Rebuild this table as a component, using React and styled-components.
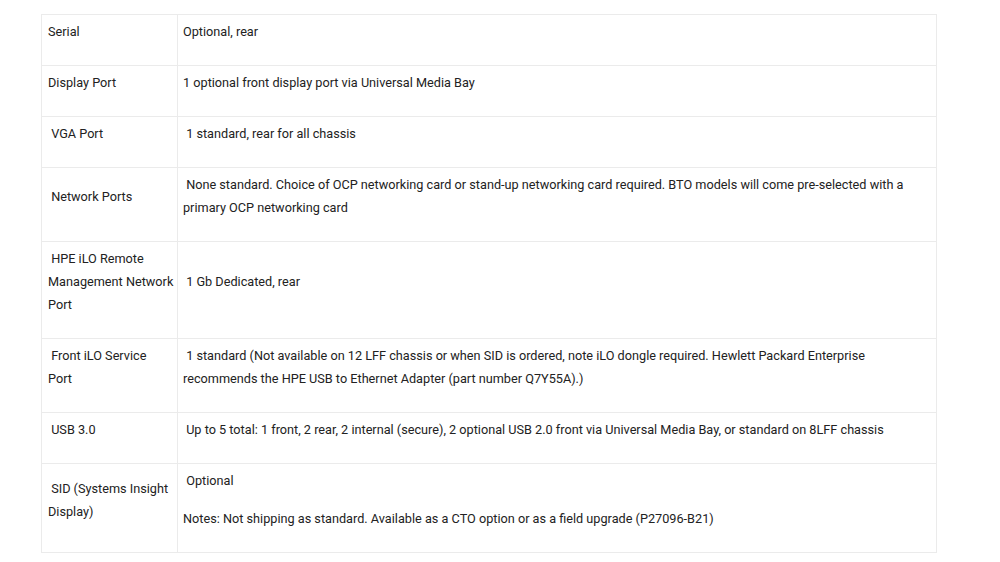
import React from "react";
import styled, { createGlobalStyle } from "styled-components";

const Global = createGlobalStyle`
  body {
    margin: 0;
    background: #ffffff;
    font-family: Roboto, "Liberation Sans", Arial, sans-serif;
  }
`;

const Page = styled.div`
  padding: 14px 0 0 41px;
`;

const Table = styled.table`
  width: 896px;
  border-collapse: collapse;
  border: 1px solid #ebebeb;
  font-size: 12.7px;
  line-height: 23px;
  color: #222222;
`;

const Row = styled.tr`
  border-bottom: 1px solid #ebebeb;
`;

const Cell = styled.td`
  vertical-align: middle;
  padding: ${(p) => (p.$label ? "5px 1px 7px 6px" : "5px 5px 7px 5px")};
  border-right: 1px solid #ebebeb;
  width: ${(p) => (p.$label ? "128px" : "auto")};

  & > p {
    margin: 0 0 15px;
  }
`;

const sp = "\u00a0";

// label lines are kept as the page breaks them
const rows = [
  { label: ["Serial"], value: ["Optional, rear"] },
  { label: ["Display Port"], value: ["1 optional front display port via Universal Media Bay"] },
  { label: [sp + "VGA Port"], value: [sp + "1 standard, rear for all chassis"] },
  {
    label: [sp + "Network Ports"],
    value: [
      sp +
        "None standard. Choice of OCP networking card or stand-up networking card required. BTO models will come pre-selected with a primary OCP networking card",
    ],
  },
  {
    label: [sp + "HPE iLO Remote", "Management Network", "Port"],
    value: [sp + "1 Gb Dedicated, rear"],
  },
  {
    label: [sp + "Front iLO Service", "Port"],
    value: [
      sp +
        "1 standard (Not available on 12 LFF chassis or when SID is ordered, note iLO dongle required. Hewlett Packard Enterprise recommends the HPE USB to Ethernet Adapter (part number Q7Y55A).)",
    ],
  },
  {
    label: [sp + "USB 3.0"],
    value: [
      sp +
        "Up to 5 total: 1 front, 2 rear, 2 internal (secure), 2 optional USB 2.0 front via Universal Media Bay, or standard on 8LFF chassis",
    ],
  },
  {
    label: [sp + "SID (Systems Insight", "Display)"],
    value: [
      sp + "Optional",
      "Notes: Not shipping as standard. Available as a CTO option or as a field upgrade (P27096-B21)",
    ],
  },
];

export default function App() {
  return (
    <Page>
      <Global />
      <Table>
        <tbody>
          {rows.map((r, i) => (
            <Row key={i}>
              <Cell $label>
                <p>
                  {r.label.map((t, j) => (
                    <React.Fragment key={j}>
                      {j > 0 && <br />}
                      {t}
                    </React.Fragment>
                  ))}
                </p>
              </Cell>
              <Cell>
                {r.value.map((t, j) => (
                  <p key={j}>{t}</p>
                ))}
              </Cell>
            </Row>
          ))}
        </tbody>
      </Table>
    </Page>
  );
}
